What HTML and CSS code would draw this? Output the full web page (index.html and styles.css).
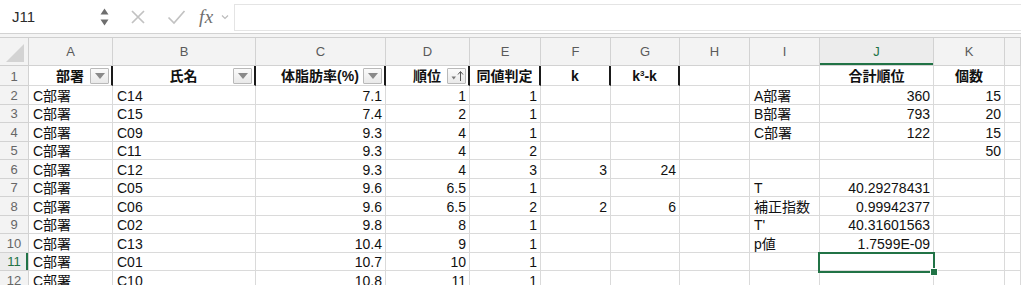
FILE: index.html
```html
<!DOCTYPE html>
<html lang="ja">
<head>
<meta charset="utf-8">
<title>Sheet</title>
<link rel="stylesheet" href="styles.css">
</head>
<body>
<div class="bar">
  <div class="namebox">
    <span class="ref">J11</span>
    <svg class="spin" width="9" height="20" viewBox="0 0 9 20"><path d="M0.5 7.5 L4.5 1.5 L8.5 7.5Z M0.5 12.5 L4.5 18.5 L8.5 12.5Z" fill="#6e6e6e"/></svg>
  </div>
  <svg class="ico-x" width="16" height="16" viewBox="0 0 16 16"><path d="M2 2 L14 14 M14 2 L2 14" stroke="#c2c2c2" stroke-width="1.7" fill="none"/></svg>
  <svg class="ico-ok" width="19" height="16" viewBox="0 0 19 16"><path d="M1.5 8.5 L7 14 L17.5 2" stroke="#c2c2c2" stroke-width="1.7" fill="none"/></svg>
  <span class="fx">fx</span>
  <svg class="chev" width="8" height="6" viewBox="0 0 8 6"><path d="M1 1.5 L4 4.5 L7 1.5" stroke="#bcbcbc" stroke-width="1.2" fill="none"/></svg>
  <div class="input"></div>
</div>
<div class="gap"></div>
<div class="sheet">
  <div class="corner"><span class="tri"></span></div>
  <div class="h">A</div><div class="h">B</div><div class="h">C</div><div class="h">D</div><div class="h">E</div><div class="h">F</div><div class="h">G</div><div class="h">H</div><div class="h">I</div><div class="h hs">J</div><div class="h">K</div><div class="h"></div>

  <div class="rh">1</div>
  <div class="c b t1">部署<span class="fb"><span class="dn"></span></span></div>
  <div class="c b t1">氏名<span class="fb"><span class="dn"></span></span></div>
  <div class="c b t1">体脂肪率(%)<span class="fb"><span class="dn"></span></span></div>
  <div class="c b t1">順位<span class="fb"><svg width="14" height="12" viewBox="0 0 14 12"><path d="M1.5 6.5 L6 6.5 L3.75 9.5Z" fill="#777"/><path d="M10.5 11 L10.5 2 M8 4.5 L10.5 1.5 L13 4.5" stroke="#555" stroke-width="1" fill="none"/></svg></span></div>
  <div class="c b t1">同値判定</div>
  <div class="c b t1">k</div>
  <div class="c b t1">k<sup>3</sup>-k</div>
  <div class="c"></div><div class="c"></div>
  <div class="c b">合計順位</div>
  <div class="c b">個数</div>
  <div class="c"></div>

  <div class="rh">2</div>
  <div class="c">C部署</div><div class="c">C14</div><div class="c n">7.1</div><div class="c n">1</div><div class="c n">1</div><div class="c"></div><div class="c"></div><div class="c"></div><div class="c">A部署</div><div class="c n">360</div><div class="c n">15</div><div class="c"></div>

  <div class="rh">3</div>
  <div class="c">C部署</div><div class="c">C15</div><div class="c n">7.4</div><div class="c n">2</div><div class="c n">1</div><div class="c"></div><div class="c"></div><div class="c"></div><div class="c">B部署</div><div class="c n">793</div><div class="c n">20</div><div class="c"></div>

  <div class="rh">4</div>
  <div class="c">C部署</div><div class="c">C09</div><div class="c n">9.3</div><div class="c n">4</div><div class="c n">1</div><div class="c"></div><div class="c"></div><div class="c"></div><div class="c">C部署</div><div class="c n">122</div><div class="c n">15</div><div class="c"></div>

  <div class="rh">5</div>
  <div class="c">C部署</div><div class="c">C11</div><div class="c n">9.3</div><div class="c n">4</div><div class="c n">2</div><div class="c"></div><div class="c"></div><div class="c"></div><div class="c"></div><div class="c"></div><div class="c n">50</div><div class="c"></div>

  <div class="rh">6</div>
  <div class="c">C部署</div><div class="c">C12</div><div class="c n">9.3</div><div class="c n">4</div><div class="c n">3</div><div class="c n">3</div><div class="c n">24</div><div class="c"></div><div class="c"></div><div class="c"></div><div class="c"></div><div class="c"></div>

  <div class="rh">7</div>
  <div class="c">C部署</div><div class="c">C05</div><div class="c n">9.6</div><div class="c n">6.5</div><div class="c n">1</div><div class="c"></div><div class="c"></div><div class="c"></div><div class="c">T</div><div class="c n">40.29278431</div><div class="c"></div><div class="c"></div>

  <div class="rh">8</div>
  <div class="c">C部署</div><div class="c">C06</div><div class="c n">9.6</div><div class="c n">6.5</div><div class="c n">2</div><div class="c n">2</div><div class="c n">6</div><div class="c"></div><div class="c">補正指数</div><div class="c n">0.99942377</div><div class="c"></div><div class="c"></div>

  <div class="rh">9</div>
  <div class="c">C部署</div><div class="c">C02</div><div class="c n">9.8</div><div class="c n">8</div><div class="c n">1</div><div class="c"></div><div class="c"></div><div class="c"></div><div class="c">T'</div><div class="c n">40.31601563</div><div class="c"></div><div class="c"></div>

  <div class="rh">10</div>
  <div class="c">C部署</div><div class="c">C13</div><div class="c n">10.4</div><div class="c n">9</div><div class="c n">1</div><div class="c"></div><div class="c"></div><div class="c"></div><div class="c">p値</div><div class="c n">1.7599E-09</div><div class="c"></div><div class="c"></div>

  <div class="rh rs">11</div>
  <div class="c">C部署</div><div class="c">C01</div><div class="c n">10.7</div><div class="c n">10</div><div class="c n">1</div><div class="c"></div><div class="c"></div><div class="c"></div><div class="c"></div><div class="c active"><span class="selbox"><span class="handle"></span></span></div><div class="c"></div><div class="c"></div>

  <div class="rh">12</div>
  <div class="c">C部署</div><div class="c">C10</div><div class="c n">10.8</div><div class="c n">11</div><div class="c n">1</div><div class="c"></div><div class="c"></div><div class="c"></div><div class="c"></div><div class="c"></div><div class="c"></div><div class="c"></div>
</div>
</body>
</html>
```

FILE: styles.css
```css
html, body {
  margin: 0;
  padding: 0;
  background: #ffffff;
  overflow: hidden;
}
body {
  width: 1021px;
  height: 285px;
  font-family: "Liberation Sans", "Noto Sans CJK JP", sans-serif;
  color: #111;
}
.bar {
  height: 33px;
  display: flex;
  align-items: center;
  border-bottom: 1px solid #d2d2d2;
  background: #ffffff;
}
.namebox {
  width: 111px;
  box-sizing: border-box;
  display: flex;
  align-items: center;
  justify-content: space-between;
  padding: 0 2px 0 12px;
  flex: none;
}
.ref {
  font-size: 15px;
  color: #2b2b2b;
}
.ico-x {
  margin-left: 19px;
  flex: none;
}
.ico-ok {
  margin-left: 21px;
  flex: none;
}
.fx {
  margin-left: 13px;
  font-family: "Liberation Serif", serif;
  font-style: italic;
  font-size: 19px;
  color: #6f6f6f;
  letter-spacing: 0.5px;
}
.chev {
  margin-left: 7px;
  flex: none;
}
.input {
  align-self: flex-start;
  margin-top: 4px;
  margin-left: 5px;
  flex: 1;
  height: 25px;
  border: 1px solid #e4e4e4;
  border-right: none;
  background: #fff;
}
.gap {
  height: 3px;
  background: #f4f4f4;
  border-bottom: 1px solid #cfcfcf;
}
.sheet {
  display: grid;
  grid-template-columns: 29px 84px 143px 130px 84px 71px 70px 69px 70px 70px 114px 71px 1fr;
  grid-template-rows: 28px 20px repeat(11, 18.5px);
}
.sheet > div {
  box-sizing: border-box;
  border-right: 1px solid #dadada;
  border-bottom: 1px solid #dadada;
  white-space: nowrap;
  overflow: hidden;
}
.corner {
  background: #f3f3f3;
  position: relative;
  border-color: #cfcfcf !important;
}
.tri {
  position: absolute;
  right: 4px;
  bottom: 3px;
  width: 0;
  height: 0;
  border-left: 18px solid transparent;
  border-bottom: 18px solid #d3d3d3;
}
.h {
  background: #f3f3f3;
  border-color: #d2d2d2 !important;
  color: #5a5a5a;
  font-size: 13px;
  display: flex;
  align-items: center;
  justify-content: center;
}
.hs {
  color: #217346;
  background: #ececec;
  box-shadow: inset 0 -2px 0 #217346;
}
.rh {
  background: #f3f3f3;
  border-color: #d2d2d2 !important;
  color: #666;
  font-size: 13px;
  display: flex;
  align-items: center;
  justify-content: center;
  padding-top: 1px;
}
.rs {
  color: #217346;
  background: #ececec;
  box-shadow: inset -2px 0 0 #217346;
}
.c {
  font-size: 14px;
  line-height: 16px;
  padding: 2px 3px 0 4px;
  display: flex;
  align-items: center;
}
.n {
  justify-content: flex-end;
}
.b {
  font-weight: 700;
  justify-content: center;
  position: relative;
  padding: 0 3px;
}
.t1 {
  border-right: 2px solid #1a1a1a !important;
}
.b sup {
  font-size: 8px;
  line-height: 0;
  position: relative;
  top: -2px;
  vertical-align: super;
}
.fb {
  position: absolute;
  right: 2px;
  top: 2px;
  width: 17px;
  height: 14px;
  border: 1px solid #b9b9b9;
  border-radius: 1px;
  background: linear-gradient(#fbfbfb, #e9e9e9);
  display: flex;
  align-items: center;
  justify-content: center;
}
.dn {
  width: 0;
  height: 0;
  border-left: 5px solid transparent;
  border-right: 5px solid transparent;
  border-top: 6px solid #8a8a8a;
}
.active {
  position: relative;
  overflow: visible !important;
}
.selbox {
  position: absolute;
  left: -2px;
  top: -1px;
  right: -2px;
  bottom: -3px;
  border: 2px solid #217346;
  z-index: 2;
}
.handle {
  position: absolute;
  right: -5px;
  bottom: -5px;
  width: 6px;
  height: 6px;
  background: #217346;
  border: 1px solid #fff;
}
```
